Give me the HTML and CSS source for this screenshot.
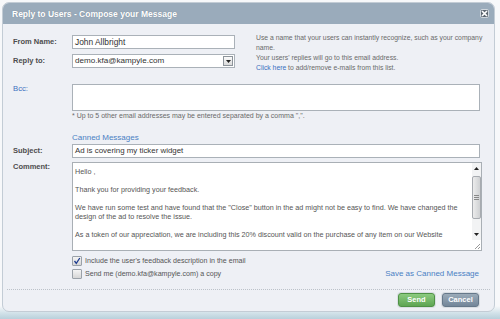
FILE: index.html
```html
<!DOCTYPE html>
<html>
<head>
<meta charset="utf-8">
<title>Reply to Users</title>
<link rel="stylesheet" href="styles.css">
</head>
<body>
<div class="dialog">
  <div class="header">
    <span class="title">Reply to Users - Compose your Message</span>
    <span class="close"><svg width="7" height="7" viewBox="0 0 7 7"><path d="M1 1L6 6M6 1L1 6" stroke="#fff" stroke-width="1.7"/></svg></span>
  </div>
  <div class="content">
    <div class="top">
      <div class="id-grid">
        <span class="lbl">From Name:</span>
        <div class="field">John Allbright</div>
        <span class="lbl">Reply to:</span>
        <div class="field select"><span>demo.kfa@kampyle.com</span><span class="drop"><svg width="5" height="3" viewBox="0 0 5 3"><path d="M0 0H5L2.5 3Z" fill="#222"/></svg></span></div>
      </div>
      <div class="help">
        <p>Use a name that your users can instantly recognize, such as your company name.</p>
        <p>Your users' replies will go to this email address.</p>
        <p><a class="link">Click here</a> to add/remove e-mails from this list.</p>
      </div>
    </div>
    <div class="form">
      <span class="lbl blue bcc-lbl">Bcc:</span>
      <div class="field bcc"></div>
      <div class="note">* Up to 5 other email addresses may be entered separated by a comma &quot;,&quot;.</div>
      <a class="canned link">Canned Messages</a>
      <span class="lbl subj-lbl">Subject:</span>
      <div class="field subject">Ad is covering my ticker widget</div>
      <span class="lbl com-lbl">Comment:</span>
      <div class="comment">
        <div class="ctext">
          <p>Hello ,</p>
          <p>Thank you for providing your feedback.</p>
          <p>We have run some test and have found that the &quot;Close&quot; button in the ad might not be easy to find. We have changed the<br>design of the ad to resolve the issue.</p>
          <p>As a token of our appreciation, we are including this 20% discount valid on the purchase of any item on our Website</p>
        </div>
        <div class="sbar">
          <div class="sbtn"><svg width="5" height="3" viewBox="0 0 5 3"><path d="M0 3H5L2.5 0Z" fill="#222"/></svg></div>
          <div class="track">
            <div class="thumb"><span class="grip"></span></div>
          </div>
          <div class="sbtn"><svg width="5" height="3" viewBox="0 0 5 3"><path d="M0 0H5L2.5 3Z" fill="#222"/></svg></div>
          <div class="corner"><svg width="6" height="6" viewBox="0 0 6 6"><path d="M6 1L1 6M6 4L4 6" stroke="#999" stroke-width="1"/></svg></div>
        </div>
      </div>
      <div class="options">
        <div class="checks">
          <div class="check"><span class="box"><svg width="8" height="8" viewBox="0 0 8 8"><path d="M1.5 4L3.3 6.3L6.8 1" fill="none" stroke="#1d3b8f" stroke-width="1.3"/></svg></span><span>Include the user's feedback description in the email</span></div>
          <div class="check"><span class="box"></span><span>Send me (demo.kfa@kampyle.com) a copy</span></div>
        </div>
        <a class="save link">Save as Canned Message</a>
      </div>
    </div>
  </div>
  <div class="footer">
    <span class="btn send">Send</span>
    <span class="btn cancel">Cancel</span>
  </div>
</div>
</body>
</html>
```
FILE: styles.css
```css
* { box-sizing: border-box; margin: 0; padding: 0; }
html, body { height: 100%; }
body {
  font-family: "Liberation Sans", Arial, sans-serif;
  color: #4a4a4a;
  background: linear-gradient(to bottom, #f7f8fa 0, #f7f8fa 306px, #d2e2e9 313px, #b9d0db 319px);
  padding: 2px 5px 0 2px;
}
.dialog {
  width: 493px;
  border: 1px solid #c3ccd5;
  border-radius: 7px;
  background: #eef0f5;
  overflow: hidden;
}
.header {
  height: 21px;
  background: #9aabbb;
  display: flex;
  align-items: center;
  justify-content: space-between;
  padding: 0 5px 0 9px;
}
.title { color: #fff; font-weight: bold; font-size: 8.5px; text-shadow: 0 0 1px rgba(80,95,110,0.5); }
.close {
  width: 9px; height: 9px;
  background: #5d6670;
  border: 1px solid #cfd6dd;
  border-radius: 2px;
  display: flex; align-items: center; justify-content: center;
}
.content { padding: 9px 12px 0 10px; }
.top { display: flex; align-items: flex-start; }
.id-grid {
  display: grid;
  grid-template-columns: 59px 163px;
  row-gap: 5px;
  padding-top: 2px;
  flex-shrink: 0;
}
.lbl { font-weight: bold; font-size: 7.5px; line-height: 14px; color: #4d4d4d; }
.blue { color: #3b6fc0; font-weight: normal; font-size: 7.7px; }
.field {
  height: 14px;
  border: 1px solid #aab1b8;
  background: #fff;
  font-size: 8.4px;
  line-height: 12px;
  padding-left: 2px;
  color: #333;
  white-space: nowrap;
}
.select { display: flex; justify-content: space-between; align-items: center; padding-right: 1px; font-size: 8.1px; }
.drop {
  width: 10px; height: 10px;
  border: 1px solid #8d949b;
  background: linear-gradient(#fbfbfb, #dadada);
  display: flex; align-items: center; justify-content: center;
}
.help { margin-left: 21px; width: 236px; flex-shrink: 0; font-size: 6.8px; line-height: 10px; color: #6a6a6a; }
.link { color: #3b6fc0; text-decoration: none; }
.form {
  display: grid;
  grid-template-columns: 59px 410px;
  margin-top: 11px;
}
.form > .note, .form > .canned, .form > .options { grid-column: 2; }
.bcc-lbl { line-height: 9px; }
.bcc { width: 408px; height: 27px; }
.note { font-size: 7px; line-height: 10px; color: #6a6a6a; }
.canned { font-size: 8px; line-height: 10px; margin-top: 12px; color: #4a80c4; }
.subj-lbl { margin-top: 1px; }
.subject { width: 408px; margin-top: 1px; font-size: 7.9px; }
.com-lbl { margin-top: 4px; line-height: 10px; }
.comment {
  width: 410px; height: 89px;
  margin-top: 4px;
  border: 1px solid #a9afb5;
  background: #fff;
  display: flex;
}
.ctext {
  flex: 1;
  padding: 4px 0 0 2px;
  font-size: 7.2px;
  line-height: 9px;
  color: #555;
  white-space: nowrap;
  overflow: hidden;
}
.ctext p { margin-bottom: 9px; }
.sbar {
  width: 9px;
  display: flex;
  flex-direction: column;
  background: #f2f3f4;
}
.sbtn { height: 11px; display: flex; align-items: center; justify-content: center; }
.track { flex: 1; padding-top: 2px; }
.thumb {
  height: 43px;
  border: 1px solid #a7abb0;
  border-radius: 2px;
  background: linear-gradient(to right, #ececec, #cfd1d3);
  display: flex; align-items: center; justify-content: center;
}
.grip {
  width: 5px; height: 5px;
  border-top: 1px solid #888;
  border-bottom: 1px solid #888;
  background: linear-gradient(#888, #888) center / 5px 1px no-repeat;
}
.corner { height: 10px; background: #fff; display: flex; align-items: flex-end; justify-content: flex-end; padding: 0 1px 1px 0; }
.options {
  display: flex;
  justify-content: space-between;
  align-items: flex-end;
  margin-top: 5px;
  padding-right: 3px;
}
.check { display: flex; align-items: center; height: 10px; gap: 3px; font-size: 7.1px; color: #555; }
.check + .check { margin-top: 3px; }
.box {
  width: 10px; height: 10px;
  border: 1px solid #9aa1a8;
  border-radius: 1px;
  background: linear-gradient(#f4f4f4, #d6d6d6);
  display: flex; align-items: center; justify-content: center;
}
.save { font-size: 8px; line-height: 10px; color: #4a80c4; }
.footer {
  margin: 10px 4px 0 4px;
  border-top: 1px dotted #bcc2c9;
  padding: 3px 11px 4px 0;
  display: flex;
  justify-content: flex-end;
  gap: 7px;
}
.btn {
  width: 37px; height: 14px;
  border-radius: 3px;
  color: #fff;
  font-weight: bold;
  font-size: 7.5px;
  line-height: 12px;
  text-align: center;
  box-shadow: 0 0 0 1px #d9dee3;
}
.send { background: linear-gradient(#8ccb80, #5ea553); border: 1px solid #4f9146; }
.cancel { background: linear-gradient(#9babb9, #738699); border: 1px solid #66788a; }
```
